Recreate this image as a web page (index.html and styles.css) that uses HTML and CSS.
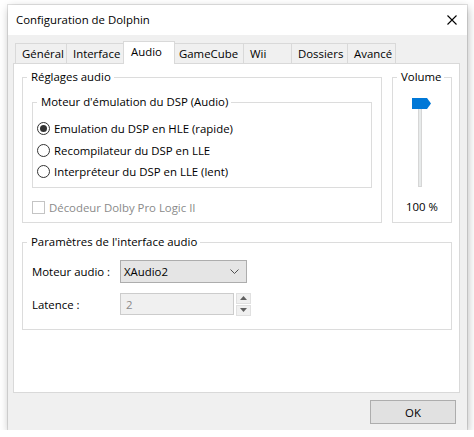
FILE: index.html
```html
<!DOCTYPE html>
<html lang="fr">
<head>
<meta charset="utf-8">
<title>Configuration de Dolphin</title>
<link rel="stylesheet" href="styles.css">
</head>
<body>
<div class="window">
  <div class="titlebar">
    <span class="title">Configuration de Dolphin</span>
    <svg class="close" width="10" height="10" viewBox="0 0 10 10"><path d="M0.5 0.5 L9.5 9.5 M9.5 0.5 L0.5 9.5" stroke="#000" stroke-width="1.1" fill="none"/></svg>
  </div>
  <div class="tabs">
    <div class="tab t-general">Général</div>
    <div class="tab t-interface">Interface</div>
    <div class="tab active t-audio">Audio</div>
    <div class="tab t-gamecube">GameCube</div>
    <div class="tab t-wii">Wii</div>
    <div class="tab t-dossiers">Dossiers</div>
    <div class="tab last t-avance">Avancé</div>
  </div>
  <div class="panel">
    <div class="top-row">
      <div class="group reglages">
        <div class="group-title">Réglages audio</div>
        <div class="group inner">
          <div class="group-title">Moteur d'émulation du DSP (Audio)</div>
          <div class="radio-list">
            <div class="radio-row"><span class="radio checked"></span><span>Emulation du DSP en HLE (rapide)</span></div>
            <div class="radio-row"><span class="radio"></span><span>Recompilateur du DSP en LLE</span></div>
            <div class="radio-row"><span class="radio"></span><span>Interpréteur du DSP en LLE (lent)</span></div>
          </div>
        </div>
        <div class="check-row disabled"><span class="checkbox"></span><span>Décodeur Dolby Pro Logic II</span></div>
      </div>
      <div class="group volume">
        <div class="group-title">Volume</div>
        <div class="slider">
          <div class="track"></div>
          <svg class="thumb" width="19" height="11" viewBox="0 0 19 11"><path d="M0 0 H15 L19 5.5 L15 11 H0 Z" fill="#0078d7"/></svg>
        </div>
        <div class="vol-value">100 %</div>
      </div>
    </div>
    <div class="group params">
      <div class="group-title">Paramètres de l'interface audio</div>
      <div class="form-row first">
        <span class="form-label">Moteur audio :</span>
        <div class="combo">
          <span>XAudio2</span>
          <svg width="9" height="5" viewBox="0 0 9 5"><path d="M0.5 0.5 L4.5 4.5 L8.5 0.5" stroke="#505050" stroke-width="1" fill="none"/></svg>
        </div>
      </div>
      <div class="form-row second">
        <span class="form-label">Latence :</span>
        <div class="field">2</div>
        <div class="spin">
          <div class="spin-btn"><svg width="7" height="4" viewBox="0 0 7 4"><path d="M0 4 L3.5 0 L7 4 Z" fill="#606060"/></svg></div>
          <div class="spin-btn"><svg width="7" height="4" viewBox="0 0 7 4"><path d="M0 0 L3.5 4 L7 0 Z" fill="#606060"/></svg></div>
        </div>
      </div>
    </div>
  </div>
  <div class="footer">
    <button class="btn">OK</button>
  </div>
</div>
</body>
</html>
```

FILE: styles.css
```css
html, body {
  margin: 0;
  padding: 0;
  background: #ffffff;
}

body {
  font-family: "Open Sans", "Noto Sans", sans-serif;
  font-size: 11.4px;
  color: #000;
  padding: 5px 0 0 8px;
}

.window {
  width: 459px;
  height: 425px;
  background: #f0f0f0;
  box-shadow: 0 0 0 1px rgba(0, 0, 0, 0.10), 1px 3px 9px rgba(0, 0, 0, 0.28);
  display: flex;
  flex-direction: column;
}

.titlebar {
  height: 30px;
  background: #fff;
  display: flex;
  align-items: center;
  justify-content: space-between;
  padding: 0 10px 0 8px;
}

.title {
  font-size: 11.4px;
  line-height: 16px;
}

.close {
  display: block;
}

.tabs {
  display: flex;
  align-items: flex-end;
  margin: 6px 0 0 7px;
  height: 22px;
}

.tab {
  box-sizing: border-box;
  height: 20px;
  line-height: 19px;
  border-top: 1px solid #d9d9d9;
  border-left: 1px solid #d9d9d9;
  background: #f0f0f0;
  padding-left: 6px;
  white-space: nowrap;
}

.tab.active {
  height: 23px;
  margin-bottom: -1px;
  background: #fff;
  border-right: 1px solid #d9d9d9;
  padding-left: 7px;
  position: relative;
  z-index: 1;
}

.tab.active + .tab {
  border-left: none;
  padding-left: 4px;
}

.tab.last {
  border-right: 1px solid #d9d9d9;
}

.t-general { width: 51px; }
.t-interface { width: 57px; }
.t-audio { width: 52px; }
.t-gamecube { width: 68px; }
.t-wii { width: 48px; }
.t-dossiers { width: 56px; }
.t-avance { width: 49px; }

.panel {
  box-sizing: border-box;
  margin-left: 5px;
  width: 447px;
  height: 330px;
  border: 1px solid #d9d9d9;
  background: #fff;
  padding: 13px 0 0 8px;
}

.top-row {
  display: flex;
  gap: 10px;
}

.group {
  box-sizing: border-box;
  border: 1px solid #dcdcdc;
  display: flex;
  flex-direction: column;
}

.group-title {
  align-self: flex-start;
  margin: -9px 0 0 4px;
  padding: 0 3px 0 4px;
  background: #fff;
  line-height: 15px;
  height: 15px;
  white-space: nowrap;
}

.reglages {
  width: 360px;
  height: 146px;
}

.inner {
  margin: 18px 9px 0;
  height: 86px;
}

.radio-list {
  margin-top: 9px;
  padding-left: 4px;
}

.radio-row {
  height: 21.5px;
  display: flex;
  align-items: center;
  gap: 4px;
  line-height: 15px;
}

.radio {
  box-sizing: border-box;
  width: 13px;
  height: 13px;
  border: 1px solid #333;
  border-radius: 50%;
  background: #fff;
  display: flex;
  align-items: center;
  justify-content: center;
  flex-shrink: 0;
}

.radio.checked::after {
  content: "";
  width: 7px;
  height: 7px;
  border-radius: 50%;
  background: #333;
}

.check-row {
  margin: 11px 0 0 9px;
  height: 16px;
  display: flex;
  align-items: center;
  gap: 4px;
  line-height: 15px;
}

.checkbox {
  box-sizing: border-box;
  width: 13px;
  height: 13px;
  border: 1px solid #c4c4c4;
  background: #fff;
}

.disabled {
  color: #8a8a8a;
}

.volume {
  width: 60px;
  height: 146px;
}

.slider {
  position: relative;
  margin: 14px 0 0 19px;
  width: 19px;
  height: 89px;
}

.track {
  box-sizing: border-box;
  margin: 6px 0 0 6px;
  width: 4px;
  height: 83px;
  border: 1px solid #d6d6d6;
  background: #e7eaea;
}

.thumb {
  position: absolute;
  top: 0;
  left: 0;
  display: block;
}

.vol-value {
  margin-top: 12px;
  text-align: center;
  line-height: 15px;
}

.params {
  margin-top: 19px;
  width: 430px;
  height: 88px;
}

.form-row {
  display: flex;
  align-items: center;
  margin-left: 9px;
  line-height: 15px;
}

.form-row.first {
  margin-top: 11px;
  height: 23px;
}

.form-row.second {
  margin-top: 10px;
  height: 22px;
}

.form-label {
  width: 88px;
}

.combo {
  box-sizing: border-box;
  width: 127px;
  height: 23px;
  background: #e5e5e5;
  border: 1px solid #adadad;
  display: flex;
  align-items: center;
  justify-content: space-between;
  padding: 0 7px 0 3px;
}

.combo svg {
  display: block;
}

.field {
  box-sizing: border-box;
  width: 114px;
  height: 22px;
  background: #f0f0f0;
  border: 1px solid #cccccc;
  color: #8a8a8a;
  padding-left: 5px;
  display: flex;
  align-items: center;
}

.spin {
  margin-left: 2px;
  display: flex;
  flex-direction: column;
  gap: 1px;
}

.spin-btn {
  box-sizing: border-box;
  width: 15px;
  height: 11px;
  border: 1px solid #e0e0e0;
  background: #f0f0f0;
  display: flex;
  align-items: center;
  justify-content: center;
}

.spin-btn svg {
  display: block;
}

.footer {
  display: flex;
  justify-content: flex-end;
  padding: 7px 11px 0 0;
}

.btn {
  box-sizing: border-box;
  width: 86px;
  height: 24px;
  background: #e1e1e1;
  border: 1px solid #adadad;
  font-family: "Open Sans", "Noto Sans", sans-serif;
  font-size: 11.4px;
  color: #000;
  padding: 0;
  line-height: 15px;
}
```
